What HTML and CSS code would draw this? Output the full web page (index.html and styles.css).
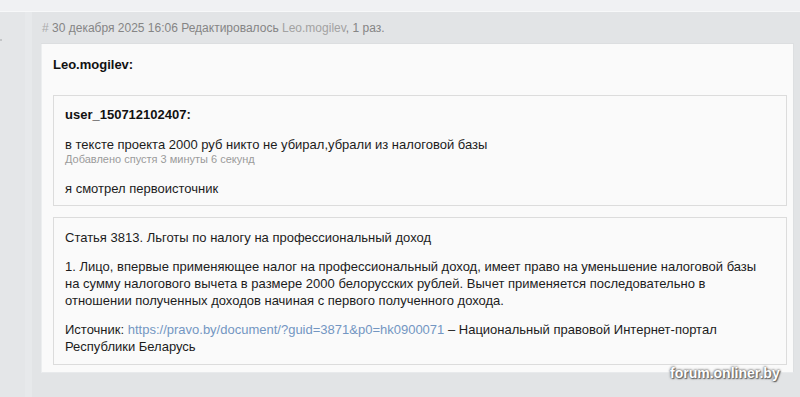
FILE: index.html
```html
<!DOCTYPE html>
<html lang="ru">
<head>
<meta charset="utf-8">
<title>forum.onliner.by</title>
<link rel="stylesheet" href="styles.css">
</head>
<body>
<div class="topstrip"></div>
<div class="main">
  <div class="side"><span class="side-mark"></span></div>
  <div class="post">
    <div class="post-head"><span class="hash">#</span> 30 декабря 2025 16:06 Редактировалось <a class="head-link" href="#">Leo.mogilev</a>, 1 раз.</div>
    <div class="post-body">
      <div class="author">Leo.mogilev:</div>
      <div class="quote q1">
        <div class="qname">user_150712102407:</div>
        <div class="qtext">в тексте проекта 2000 руб никто не убирал,убрали из налоговой базы</div>
        <div class="added">Добавлено спустя 3 минуты 6 секунд</div>
        <div class="qtext gap">я смотрел первоисточник</div>
      </div>
      <div class="quote q2">
        <div class="qtext">Статья 3813. Льготы по налогу на профессиональный доход</div>
        <div class="qtext gap12">1. Лицо, впервые применяющее налог на профессиональный доход, имеет право на уменьшение налоговой базы на сумму налогового вычета в размере 2000 белорусских рублей. Вычет применяется последовательно в отношении полученных доходов начиная с первого полученного дохода.</div>
        <div class="qtext gap12">Источник: <a class="link" href="#">https://pravo.by/document/?guid=3871&amp;p0=hk0900071</a> – Национальный правовой Интернет-портал Республики Беларусь</div>
      </div>
    </div>
  </div>
</div>
<div class="watermark">forum.onliner.by</div>
</body>
</html>
```
FILE: styles.css
```css
html, body {
  margin: 0;
  padding: 0;
}
body {
  width: 800px;
  height: 397px;
  overflow: hidden;
  background: #e2e4e6;
  font-family: "Liberation Sans", Arial, sans-serif;
  color: #1c1c1c;
  position: relative;
}
.topstrip {
  height: 11px;
  background: #f0f1f3;
  border-bottom: 1px solid #f7f8f9;
}
.main {
  display: flex;
}
.side {
  width: 25px;
  flex: none;
  height: 385px;
  background: #e4e6e8;
  border-right: 7px solid #e7e9eb;
  position: relative;
}
.side-mark {
  position: absolute;
  left: 0;
  top: 27px;
  width: 2px;
  height: 2px;
  background: #c4c6c8;
}
.post {
  margin-left: 9px;
  width: 753px;
}
.post-head {
  height: 32px;
  box-sizing: border-box;
  padding: 9px 0 0 1px;
  font-size: 12px;
  line-height: 15px;
  color: #858585;
  border-bottom: 1px solid #dcdee0;
}
.hash {
  color: #aaa;
}
.head-link {
  color: #a2a2a2;
  text-decoration: none;
}
.post-body {
  background: #fafafa;
  border-left: 1px solid #eceeef;
  border-right: 1px solid #dddfe1;
  border-bottom: 1px solid #e8eaec;
  padding: 13px 6px 7px 11px;
}
.author {
  font-size: 13px;
  font-weight: bold;
  line-height: 16px;
  color: #111;
  margin-bottom: 22px;
}
.quote {
  border: 1px solid #dcdcdc;
  background: #fafafa;
  padding: 10px 12px 8px 11px;
}
.q1 {
  margin-bottom: 11px;
}
.q2 {
  padding-top: 11px;
  padding-bottom: 9px;
}
.qname {
  font-size: 13px;
  font-weight: bold;
  line-height: 17px;
  color: #111;
  margin-bottom: 13px;
}
.qtext {
  font-size: 13px;
  line-height: 17px;
  color: #1c1c1c;
}
.gap {
  margin-top: 14px;
}
.gap12 {
  margin-top: 12px;
}
.added {
  font-size: 11px;
  line-height: 13px;
  color: #9a9a9a;
}
.link {
  color: #7396c2;
  text-decoration: none;
}
.watermark {
  position: absolute;
  left: 670px;
  top: 364px;
  font-size: 14px;
  font-weight: bold;
  line-height: 18px;
  color: #fff;
  text-shadow: 0 0 2px #555, 0 0 3px #777, 1px 1px 1px #666;
}
```
